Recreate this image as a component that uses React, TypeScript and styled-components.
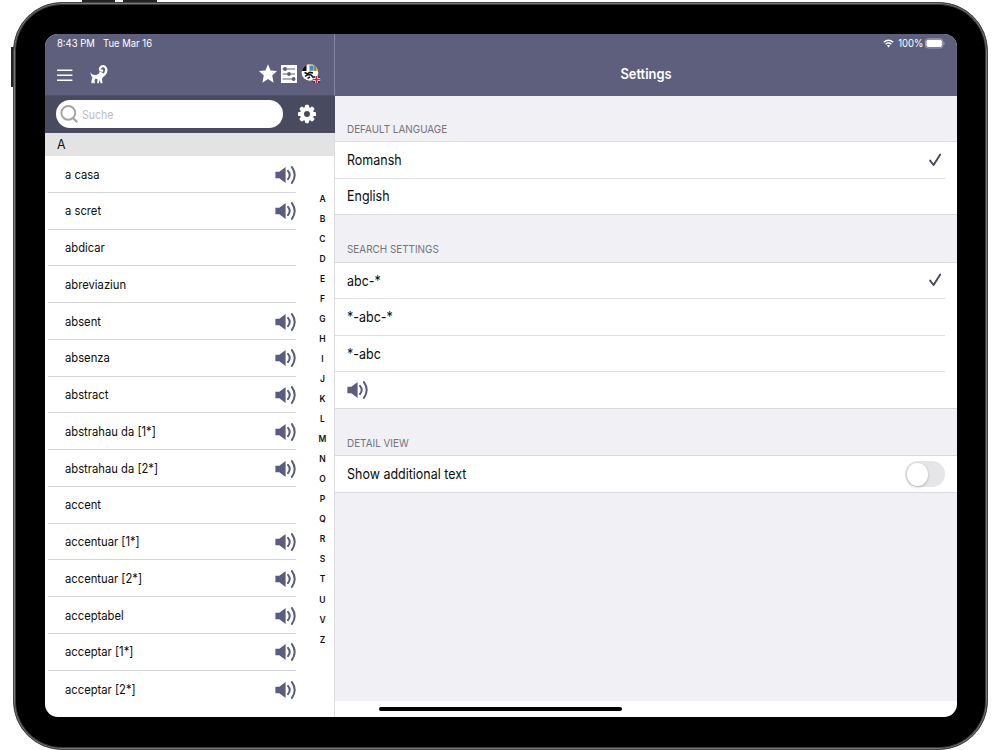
import React, {useState} from "react";
import {createGlobalStyle, styled} from "styled-components";

const GlobalStyle = createGlobalStyle`
  * {
    box-sizing: border-box;
  }

  body {
    margin: 0;
    width: 1000px;
    height: 750px;
    overflow: hidden;
    background: #fff;
    font-family: Inter, "Liberation Sans", sans-serif;
  }
`

const Stage = styled.main`
  position: relative;
  width: 1000px;
  height: 750px;
  padding: 2px 12px 0 13px;
  overflow: hidden;
`

const SideButton = styled.i<{ $x: number, $y: number, $w: number, $h: number }>`
  position: absolute;
  left: ${p => p.$x}px;
  top: ${p => p.$y}px;
  width: ${p => p.$w}px;
  height: ${p => p.$h}px;
  background: #222;
`

const Device = styled.div`
  position: relative;
  width: 975px;
  height: 748px;
  padding: 29px;
  border: 1px solid #444;
  border-radius: 49px;
  background: #000;
  box-shadow: inset 0 0 0 1px #777, inset 0 0 0 2px #3a3a3a;
`

const Screen = styled.div`
  position: relative;
  display: flex;
  width: 912px;
  height: 683px;
  margin: 2px 0 0 2px;
  border-radius: 13px;
  overflow: hidden;
  background: #fff;
`

const Sidebar = styled.aside`
  display: flex;
  flex-direction: column;
  width: 290px;
  border-right: 1px solid #dcdce0;
`

const Main = styled.section`
  display: flex;
  flex-direction: column;
  flex: 1;
`

const Label = styled.span<{ $size?: number, $squeeze?: number, $origin?: string }>`
  display: inline-block;
  font-size: ${p => p.$size ?? 13}px;
  line-height: 1.25;
  white-space: nowrap;
  transform: scaleX(${p => p.$squeeze ?? 1});
  transform-origin: ${p => p.$origin ?? "left"} center;
`

const Header = styled.header`
  display: flex;
  flex-direction: column;
  height: 61.5px;
  background: #5d5f7d;
  color: #fff;
`

const SideHeader = styled(Header)`
  margin-right: -1px;
  border-right: 1px solid #8587a0;
  border-bottom: 1px solid #50526c;
`

const StatusBar = styled.div<{ $end?: boolean }>`
  display: flex;
  align-items: center;
  justify-content: ${p => p.$end ? "flex-end" : "flex-start"};
  height: 19px;
  gap: ${p => p.$end ? 2 : 5}px;
  padding: 0 12px;
`

const Toolbar = styled.div`
  display: flex;
  align-items: center;
  height: 43px;
  padding: 0 13px 0 12px;

  svg {
    display: block;
    flex: none;
  }
`

const MenuButton = styled.span`
  padding-top: 3px;
`

const Goat = styled.svg`
  margin-left: 17px;
`

const Actions = styled.div`
  display: flex;
  align-items: center;
  gap: 4px;
  margin-left: auto;
`

const Title = styled.h1`
  margin: 0;
  height: 42px;
  line-height: 42px;
  text-align: center;
  font-size: 14px;
  font-weight: 600;
  transform: scaleX(0.92);
`

const SearchBar = styled.div`
  display: flex;
  align-items: center;
  height: 37px;
  margin-right: -1px;
  padding: 0 19px 0 11px;
  justify-content: space-between;
  background: #484a60;
`

const SearchField = styled.label`
  display: flex;
  align-items: center;
  width: 227px;
  height: 28px;
  padding: 0 4px;
  gap: 3px;
  border-radius: 14px;
  background: #fff;
  color: #bdbdbd;
`

const LetterHead = styled.div`
  display: flex;
  align-items: center;
  height: 23.5px;
  padding: 1px 12px 0;
  background: #e3e3e3;
  color: #111;
`

const ListArea = styled.div`
  display: flex;
  flex: 1;
`

const WordList = styled.ul`
  width: 248px;
  margin: 0 0 0 3px;
  padding: 0;
  list-style: none;
`

const Word = styled.li`
  display: flex;
  align-items: center;
  justify-content: space-between;
  height: 36.76px;
  padding: 1.6px 0 0 16.8px;
  border-bottom: 1px solid #d4d4d4;
  color: #0c0c0c;

  &:last-child {
    border-bottom: 0;
  }
`

const IndexRail = styled.nav`
  display: flex;
  flex-direction: column;
  align-items: center;
  width: 18px;
  margin-left: 17.5px;
  padding-top: 32.6px;
`

const IndexLetter = styled.span`
  height: 20.05px;
  line-height: 20px;
  font-size: 8.5px;
  font-weight: 600;
  color: #111;
`

const Settings = styled.div`
  height: 605.5px;
  background: #f0f0f5;
`

const GroupTitle = styled.h2<{ $height: number }>`
  display: flex;
  align-items: flex-end;
  height: ${p => p.$height}px;
  margin: 0;
  padding: 0 12px 5px;
  font-weight: 400;
  color: #74747a;
`

const FirstGroupTitle = styled(GroupTitle)`
  padding-bottom: 4px;
`

const Group = styled.div`
  border-top: 1px solid #d9d9de;
  border-bottom: 1px solid #d9d9de;
  background: #fff;
`

const SettingRow = styled.div`
  display: flex;
  align-items: center;
  justify-content: space-between;
  height: 36.6px;
  margin-right: 12px;
  padding-left: 12px;
  border-bottom: 1px solid #dfdfe2;
  color: #0c0c0c;

  &:last-child {
    height: 35.5px;
    border-bottom: 0;
  }
`

const CheckMark = styled.svg`
  margin-right: 3px;
`

const Switch = styled.button<{ $on: boolean }>`
  display: flex;
  justify-content: ${p => p.$on ? "flex-end" : "flex-start"};
  width: 40px;
  height: 26px;
  padding: 1.5px;
  border: 0;
  border-radius: 13px;
  background: ${p => p.$on ? "#5d5f7d" : "#e6e6e8"};

  &::after {
    content: "";
    width: 21.5px;
    height: 23px;
    border-radius: 50%;
    background: #fff;
    box-shadow: 0 1px 3px rgba(0, 0, 0, 0.25);
  }
`

const HomeIndicator = styled.i`
  position: absolute;
  left: 334px;
  bottom: 6px;
  width: 243px;
  height: 4.5px;
  border-radius: 3px;
  background: #000;
`

const SpeakerIcon = () => (
    <svg width="21" height="18" viewBox="0 0 21 18">
        <path d="M0.4 5.7H4.3L10.6 1V17L4.3 12.3H0.4Z" fill="#5a5c80"/>
        <path d="M13 4.9Q16.4 9 13 13.1M16.9 1.1Q22.5 9 16.9 16.9" fill="none" stroke="#5a5c80"
              strokeWidth="2" strokeLinecap="round"/>
    </svg>
)

const CheckIcon = () => (
    <CheckMark width="14" height="14" viewBox="0 0 14 14">
        <path d="M2.1 7.6L5.6 12L12.2 1.6" fill="none" stroke="#45465e" strokeWidth="1.9" strokeLinecap="round"
              strokeLinejoin="round"/>
    </CheckMark>
)

const MenuIcon = () => (
    <svg width="16" height="14" viewBox="0 0 16 14">
        <path d="M0 2.2H15.4M0 7.2H15.4M0 12.2H15.4" stroke="#fff" strokeWidth="1.4"/>
    </svg>
)

const GoatIcon = () => (
    <Goat width="18" height="20" viewBox="0 0 18 20">
        <path
            d="M0.2 8L1.9 10.3C4.8 11.6 7.3 11.2 9.4 9L9.2 7.6L11.6 8.2L14.2 10L12.8 13L12 15.2L12.5 19.2H10.6L9.6 15.8L8.8 19.2H7.2L7.5 15.3L5.4 14.6L4.6 16.4L4.9 19.2H3.3L2.9 17.4L2.7 19.2H1.3L1.6 16L2.4 13.6L1.3 11.9Z"
            fill="#fff"/>
        <path d="M12.1 6.6C10.2 7 9.5 5.2 10.3 3.8C11.6 1.5 15 1.7 16 4.3C17 7.2 15.3 10 12.6 12" fill="none"
              stroke="#fff" strokeWidth="2.3" strokeLinecap="round"/>
    </Goat>
)

const StarIcon = () => (
    <svg width="18" height="19" viewBox="0 0 18 19">
        <path d="M9 .2L11.6 6.4L18 7L13.2 11.6L14.6 18.8L9 15.1L3.4 18.8L4.8 11.6L0 7L6.4 6.4Z" fill="#fff"/>
    </svg>
)

const SlidersIcon = () => (
    <svg width="16" height="18" viewBox="0 0 16 18">
        <rect width="16" height="18" fill="#fff"/>
        <path d="M1.5 4H14M1.5 9H14M1.5 14H14" stroke="#5d5f7d" strokeWidth="1"/>
        <circle cx="4" cy="4" r="1.9" fill="#5d5f7d"/>
        <circle cx="8" cy="9" r="1.9" fill="#5d5f7d"/>
        <circle cx="12.6" cy="14" r="1.9" fill="#5d5f7d"/>
    </svg>
)

const FlagIcon = () => (
    <svg width="20" height="21" viewBox="0 0 20 21">
        <defs>
            <clipPath id="crest"><circle cx="8.9" cy="9.5" r="8.3"/></clipPath>
        </defs>
        <g clipPath="url(#crest)">
            <rect width="18" height="18" fill="#fff"/>
            <path d="M0 0H5.5V8H0Z" fill="#111"/>
            <path d="M8.2 0H17V8H8.2Z" fill="#dcb727"/>
            <path d="M9 3H12.2V7.5H9ZM13.3 2H15V7.5H13.3Z" fill="#368fd0"/>
            <path d="M3.5 9.5L6.5 10.8L9 9.4L12 10M4 13.4L7 11.6L10 12L12.4 14.4M6.5 15.4L9 14"
                  fill="none" stroke="#111" strokeWidth="1.5"/>
        </g>
        <rect x="11.8" y="13" width="7.4" height="7" rx="1.5" fill="#34406f"/>
        <path d="M11.8 16.5H19.2M15.5 13V20" stroke="#fff" strokeWidth="2.8"/>
        <path d="M11.8 16.5H19.2M15.5 13V20" stroke="#d3223c" strokeWidth="1.7"/>
    </svg>
)

const SearchIcon = () => (
    <svg width="19" height="20" viewBox="0 0 19 20">
        <circle cx="8.3" cy="8.9" r="6.9" fill="none" stroke="#a4a4a4" strokeWidth="1.9"/>
        <path d="M13 13.9L17.2 18.2" stroke="#a4a4a4" strokeWidth="2.2"/>
    </svg>
)

const GearIcon = () => (
    <svg width="18" height="20" viewBox="0 0 18 20">
        <g fill="#fff">
            {[0, 45, 90, 135].map(angle => (
                <rect key={angle} x="6.9" y="0.8" width="4.2" height="18.4" rx="1.4"
                      transform={`rotate(${angle} 9 10)`}/>
            ))}
        </g>
        <circle cx="9" cy="10" r="5" fill="#484a60" stroke="#fff" strokeWidth="4"/>
    </svg>
)

const WifiIcon = () => (
    <svg width="11" height="9" viewBox="0 0 11 9">
        <path d="M0.8 3.2Q5.5 -0.9 10.2 3.2M2.6 5.2Q5.5 2.7 8.4 5.2" fill="none" stroke="#fff" strokeWidth="1.4"/>
        <path d="M3.8 6.6Q5.5 5.2 7.2 6.6L5.5 8.4Z" fill="#fff"/>
    </svg>
)

const BatteryIcon = () => (
    <svg width="20" height="11" viewBox="0 0 20 11">
        <rect x="0.5" y="0.8" width="17.3" height="9.2" rx="2.6" fill="none" stroke="#a1a2b4"/>
        <rect x="1.4" y="1.8" width="15.5" height="7.2" rx="1.8" fill="#fff"/>
        <path d="M18.8 4V7Q19.8 5.5 18.8 4Z" fill="#a1a2b4" stroke="#a1a2b4" strokeWidth=".5"/>
    </svg>
)

const words = [
    {name: "a casa", audio: true},
    {name: "a scret", audio: true},
    {name: "abdicar", audio: false},
    {name: "abreviaziun", audio: false},
    {name: "absent", audio: true},
    {name: "absenza", audio: true},
    {name: "abstract", audio: true},
    {name: "abstrahau da [1*]", audio: true},
    {name: "abstrahau da [2*]", audio: true},
    {name: "accent", audio: false},
    {name: "accentuar [1*]", audio: true},
    {name: "accentuar [2*]", audio: true},
    {name: "acceptabel", audio: true},
    {name: "acceptar [1*]", audio: true},
    {name: "acceptar [2*]", audio: true},
]

const letters = "ABCDEFGHIJKLMNOPQRSTUVZ".split("")

export default function App() {
    const [language, setLanguage] = useState("Romansh")
    const [search, setSearch] = useState("abc-*")
    const [additional, setAdditional] = useState(false)

    return (
        <>
            <GlobalStyle/>
            <Stage>
                <SideButton $x={82} $y={0} $w={33} $h={4}/>
                <SideButton $x={123} $y={0} $w={34} $h={4}/>
                <SideButton $x={11} $y={47} $w={4} $h={40}/>
                <Device>
                    <Screen>
                        <Sidebar>
                            <SideHeader>
                                <StatusBar>
                                    <Label $size={10.3} $squeeze={0.92}>8:43 PM</Label>
                                    <Label $size={10.3} $squeeze={0.92}>Tue Mar 16</Label>
                                </StatusBar>
                                <Toolbar>
                                    <MenuButton><MenuIcon/></MenuButton>
                                    <GoatIcon/>
                                    <Actions>
                                        <StarIcon/>
                                        <SlidersIcon/>
                                        <FlagIcon/>
                                    </Actions>
                                </Toolbar>
                            </SideHeader>
                            <SearchBar>
                                <SearchField>
                                    <SearchIcon/>
                                    <Label $size={12} $squeeze={0.88}>Suche</Label>
                                </SearchField>
                                <GearIcon/>
                            </SearchBar>
                            <LetterHead><Label $size={13.5} $squeeze={0.92}>A</Label></LetterHead>
                            <ListArea>
                                <WordList>
                                    {words.map(word => (
                                        <Word key={word.name}>
                                            <Label $size={12.7} $squeeze={0.885}>{word.name}</Label>
                                            {word.audio && <SpeakerIcon/>}
                                        </Word>
                                    ))}
                                </WordList>
                                <IndexRail>
                                    {letters.map(letter => <IndexLetter key={letter}>{letter}</IndexLetter>)}
                                </IndexRail>
                            </ListArea>
                        </Sidebar>
                        <Main>
                            <Header>
                                <StatusBar $end>
                                    <WifiIcon/>
                                    <Label $size={10.3} $squeeze={0.92} $origin="right">100%</Label>
                                    <BatteryIcon/>
                                </StatusBar>
                                <Title>Settings</Title>
                            </Header>
                            <Settings>
                                <FirstGroupTitle $height={45.5}>
                                    <Label $size={11} $squeeze={0.9}>DEFAULT LANGUAGE</Label>
                                </FirstGroupTitle>
                                <Group>
                                    {["Romansh", "English"].map(item => (
                                        <SettingRow key={item} onClick={() => setLanguage(item)}>
                                            <Label $size={14.2} $squeeze={0.88}>{item}</Label>
                                            {language === item && <CheckIcon/>}
                                        </SettingRow>
                                    ))}
                                </Group>
                                <GroupTitle $height={46.5}>
                                    <Label $size={11} $squeeze={0.9}>SEARCH SETTINGS</Label>
                                </GroupTitle>
                                <Group>
                                    {["abc-*", "*-abc-*", "*-abc"].map(item => (
                                        <SettingRow key={item} onClick={() => setSearch(item)}>
                                            <Label $size={14.2} $squeeze={0.88}>{item}</Label>
                                            {search === item && <CheckIcon/>}
                                        </SettingRow>
                                    ))}
                                    <SettingRow><SpeakerIcon/></SettingRow>
                                </Group>
                                <GroupTitle $height={46.5}>
                                    <Label $size={11} $squeeze={0.9}>DETAIL VIEW</Label>
                                </GroupTitle>
                                <Group>
                                    <SettingRow>
                                        <Label $size={14.2} $squeeze={0.88}>Show additional text</Label>
                                        <Switch $on={additional} onClick={() => setAdditional(!additional)}/>
                                    </SettingRow>
                                </Group>
                            </Settings>
                        </Main>
                        <HomeIndicator/>
                    </Screen>
                </Device>
            </Stage>
        </>
    );
}
